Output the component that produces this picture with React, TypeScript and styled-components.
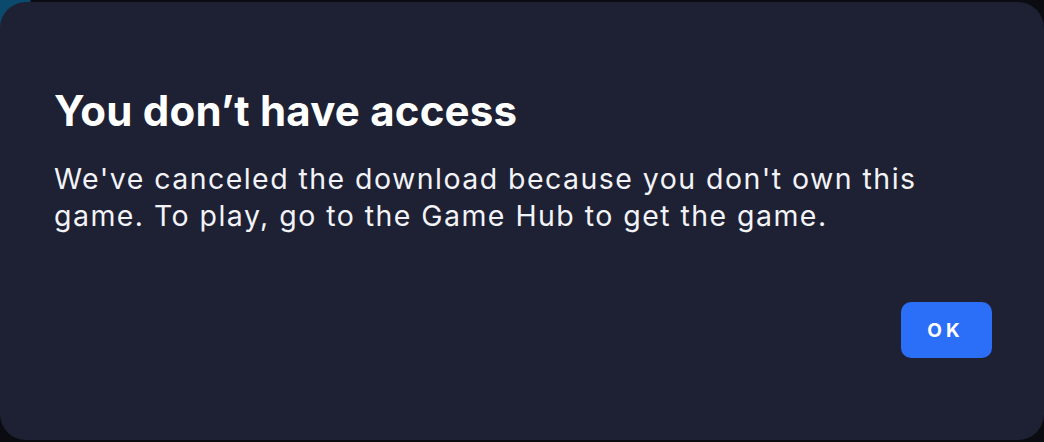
import React from 'react';
import styled, { createGlobalStyle } from 'styled-components';

const GlobalStyle = createGlobalStyle`
  html, body {
    margin: 0;
    padding: 0;
    background: #0b0c12;
    font-family: Inter, 'Open Sans', sans-serif;
  }
`;

const Backdrop = styled.div`
  width: 1044px;
  height: 442px;
  box-sizing: border-box;
  padding: 2px 0;
  background:
    radial-gradient(circle at 0 0, #0b4a6c 0, #0b4a6c 30px, transparent 31px),
    #0b0c12;
`;

const Dialog = styled.div`
  height: 100%;
  box-sizing: border-box;
  background: #1e2033;
  border-radius: 26px;
  padding: 83px 52px 82px 54px;
  display: flex;
  flex-direction: column;
`;

const Title = styled.h1`
  margin: 0;
  font-size: 42px;
  line-height: 52px;
  font-weight: 700;
  letter-spacing: 0.2px;
  color: #ffffff;
`;

const Message = styled.p`
  margin: 23px 0 0 0;
  max-width: 880px;
  font-size: 28.5px;
  line-height: 37px;
  font-weight: 400;
  letter-spacing: 1.45px;
  color: #f2f3f7;
`;

const Actions = styled.div`
  margin-top: auto;
  display: flex;
  justify-content: flex-end;
`;

const OkButton = styled.button`
  width: 91px;
  height: 56px;
  border: none;
  border-radius: 10px;
  background: #2b6ef8;
  color: #ffffff;
  font-family: inherit;
  font-size: 19px;
  font-weight: 700;
  letter-spacing: 4px;
  padding-left: 4px;
  cursor: pointer;
`;

const App = () => {
  return (
    <>
      <GlobalStyle />
      <Backdrop>
        <Dialog>
          <Title>You don’t have access</Title>
          <Message>
            We've canceled the download because you don't own this game. To play, go to the Game Hub to get the game.
          </Message>
          <Actions>
            <OkButton type="button">OK</OkButton>
          </Actions>
        </Dialog>
      </Backdrop>
    </>
  );
};

export default App;
